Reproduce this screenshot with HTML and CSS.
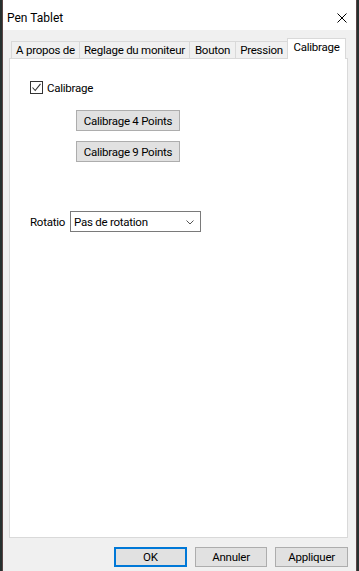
FILE: index.html
```html
<!DOCTYPE html>
<html>
<head>
<meta charset="utf-8">
<title>Pen Tablet</title>
<link rel="stylesheet" href="styles.css">
</head>
<body>
<div class="window">
  <div class="titlebar">
    <span class="title">Pen Tablet</span>
    <svg class="close" width="10" height="10" viewBox="0 0 10 10"><path d="M0.5 0.5 L9.5 9.5 M9.5 0.5 L0.5 9.5" stroke="#000" stroke-width="1" fill="none"/></svg>
  </div>
  <div class="client">
    <div class="tabs">
      <div class="tab t1">A propos de</div>
      <div class="tab t2">Reglage du moniteur</div>
      <div class="tab t3">Bouton</div>
      <div class="tab t4">Pression</div>
      <div class="tab active">Calibrage</div>
    </div>
    <div class="panel">
      <label class="check">
        <span class="box"><svg width="11" height="11" viewBox="0 0 11 11"><path d="M1.5 5.5 L4.2 8.5 L9.5 1.8" stroke="#333" stroke-width="1.1" fill="none"/></svg></span>
        <span class="check-label">Calibrage</span>
      </label>
      <div class="cal-buttons">
        <button class="btn cal">Calibrage 4 Points</button>
        <button class="btn cal">Calibrage 9 Points</button>
      </div>
      <div class="rotation">
        <span class="rot-label">Rotatio</span>
        <div class="select">
          <span>Pas de rotation</span>
          <svg class="chev" width="8" height="5" viewBox="0 0 8 5"><path d="M0.5 0.5 L4 4 L7.5 0.5" stroke="#555" stroke-width="1" fill="none"/></svg>
        </div>
      </div>
    </div>
    <div class="footer">
      <button class="btn foot ok">OK</button>
      <button class="btn foot">Annuler</button>
      <button class="btn foot">Appliquer</button>
    </div>
  </div>
</div>
</body>
</html>
```
FILE: styles.css
```css
* { box-sizing: border-box; }
html, body {
  margin: 0;
  padding: 0;
}
body {
  width: 359px;
  height: 571px;
  overflow: hidden;
  background: #26302f;
  font-family: Roboto, "Liberation Sans", sans-serif;
  font-size: 11.5px;
  letter-spacing: -0.25px;
  line-height: 16px;
  color: #000;
}
.window {
  margin-left: 2px;
  width: 355px;
  height: 571px;
  border-left: 1px solid #5a4545;
  border-right: 1px solid #5a4545;
  background: #f0f0f0;
  display: flex;
  flex-direction: column;
}
.titlebar {
  height: 30px;
  background: #fff;
  display: flex;
  align-items: flex-start;
  padding-top: 10px;
  padding-left: 4px;
}
.title { flex: 1; font-size: 12px; letter-spacing: 0; }
.close {
  margin-top: 3px;
  margin-right: 9px;
}
.client {
  flex: 1;
  display: flex;
  flex-direction: column;
  padding: 8px 8px 0 6px;
}
.tabs {
  height: 20px;
  display: flex;
  align-items: flex-end;
  padding-left: 2px;
}
.tab {
  height: 17px;
  border: 1px solid #d9d9d9;
  border-bottom: none;
  background: #f0f0f0;
  text-align: center;
  white-space: nowrap;
  margin-left: -1px;
}
.tab.t1 { width: 69px; margin-left: 0; }
.tab.t2 { width: 111px; }
.tab.t3 { width: 47px; }
.tab.t4 { width: 53px; }
.tab.active {
  width: 59px;
  height: 21px;
  margin-bottom: -1px;
  background: #fff;
  position: relative;
  z-index: 1;
}
.panel {
  width: 339px;
  height: 480px;
  background: #fff;
  border: 1px solid #d9d9d9;
  display: flex;
  flex-direction: column;
  align-items: flex-start;
  padding: 22px 0 0 20px;
}
.check {
  display: flex;
  align-items: center;
  height: 13px;
}
.box {
  width: 13px;
  height: 13px;
  border: 1px solid #333;
  background: #fff;
  display: flex;
  align-items: center;
  justify-content: center;
}
.check-label {
  margin-left: 4px;
}
.cal-buttons {
  margin-top: 16px;
  margin-left: 46px;
  display: flex;
  flex-direction: column;
  gap: 10px;
}
.btn {
  font-family: inherit;
  font-size: inherit;
  letter-spacing: inherit;
  line-height: 16px;
  color: #000;
  background: #e1e1e1;
  border: 1px solid #adadad;
  padding: 0;
  margin: 0;
  text-align: center;
}
.btn.cal {
  width: 104px;
  height: 21px;
}
.rotation {
  margin-top: 49px;
  display: flex;
  align-items: center;
}
.rot-label {
  width: 40px;
}
.select {
  width: 131px;
  height: 21px;
  border: 1px solid #7a7a7a;
  background: #fff;
  display: flex;
  align-items: center;
  justify-content: space-between;
  padding: 0 6px 0 3px;
}
.chev { margin-top: 1px; }
.footer {
  display: flex;
  gap: 8px;
  margin-top: 9px;
  padding-left: 105px;
}
.btn.foot {
  width: 73px;
  height: 20px;
}
.btn.ok {
  border: 2px solid #0078d7;
}
```
